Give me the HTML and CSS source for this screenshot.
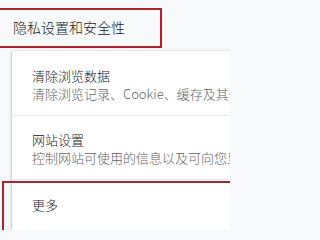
FILE: index.html
```html
<!DOCTYPE html>
<html lang="zh-CN">
<head>
<meta charset="utf-8">
<link rel="stylesheet" href="styles.css">
</head>
<body>
<div class="page">
  <div class="header">
    <span class="header-title">隐私设置和安全性</span>
  </div>
  <div class="card">
    <div class="row">
      <div class="row-title">清除浏览数据</div>
      <div class="row-sub">清除浏览记录、Cookie、缓存及其他数据</div>
    </div>
    <div class="row">
      <div class="row-title">网站设置</div>
      <div class="row-sub">控制网站可使用的信息以及可向您显示的内容</div>
    </div>
    <div class="row row-single">
      <div class="row-title">更多</div>
      <div class="highlight"></div>
    </div>
  </div>
</div>
</body>
</html>
```

FILE: styles.css
```css
html, body {
  margin: 0;
  padding: 0;
  background: #f8f9fa;
  overflow: hidden;
}
.page {
  width: 230px;
  height: 230px;
  overflow: hidden;
  font-family: "Noto Sans CJK SC", "Liberation Sans", sans-serif;
  font-weight: 300;
  color: #202124;
}
.header {
  box-sizing: border-box;
  margin: 8px 0 0 -4px;
  width: 166px;
  height: 40px;
  border: 2px solid #ac242c;
  display: flex;
  align-items: center;
  padding: 0 0 3px 15px;
}
.header-title {
  font-size: 14px;
  line-height: 18px;
  white-space: nowrap;
}
.card {
  margin: 3px 0 0 12px;
  width: 260px;
  background: #fff;
  box-shadow: 0 1px 2px rgba(60, 64, 67, 0.3), 0 1px 3px 1px rgba(60, 64, 67, 0.15);
}
.row {
  position: relative;
  box-sizing: border-box;
  height: 64px;
  display: flex;
  flex-direction: column;
  justify-content: center;
  padding: 3px 0 0 20px;
  border-top: 1px solid #e8eaed;
}
.row:first-child {
  border-top: none;
}
.row-single {
  height: 60px;
  justify-content: flex-start;
  padding-top: 16px;
}
.row-title {
  font-size: 13px;
  line-height: 18px;
  white-space: nowrap;
}
.row-sub {
  font-size: 13px;
  line-height: 18px;
  color: #5f6368;
  white-space: nowrap;
}
.highlight {
  position: absolute;
  left: -10px;
  top: 1px;
  width: 300px;
  height: 120px;
  border: 2px solid #ac242c;
}
```
